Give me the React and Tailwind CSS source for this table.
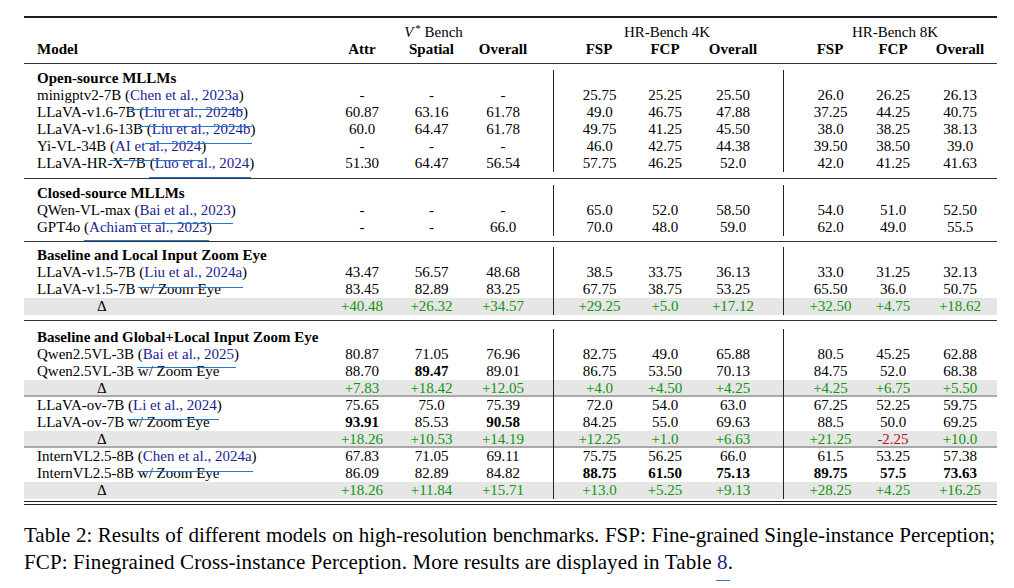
import React from "react";

const GRID =
  "grid grid-cols-[303px_70px_69px_74px_13px_92px_40px_96px_2px_94px_32px_14px_74px] h-[17px] items-center";

const sections = [
  {
    title: "Open-source MLLMs",
    rows: [
      { name: "minigptv2-7B", cite: "Chen et al., 2023a", v: ["-", "-", "-", "25.75", "25.25", "25.50", "26.0", "26.25", "26.13"] },
      { name: "LLaVA-v1.6-7B", cite: "Liu et al., 2024b", v: ["60.87", "63.16", "61.78", "49.0", "46.75", "47.88", "37.25", "44.25", "40.75"] },
      { name: "LLaVA-v1.6-13B", cite: "Liu et al., 2024b", v: ["60.0", "64.47", "61.78", "49.75", "41.25", "45.50", "38.0", "38.25", "38.13"] },
      { name: "Yi-VL-34B", cite: "AI et al., 2024", v: ["-", "-", "-", "46.0", "42.75", "44.38", "39.50", "38.50", "39.0"] },
      { name: "LLaVA-HR-X-7B", cite: "Luo et al., 2024", v: ["51.30", "64.47", "56.54", "57.75", "46.25", "52.0", "42.0", "41.25", "41.63"] },
    ],
    pt: "pt-[6px]",
    pb: "pb-[6px]",
  },
  {
    title: "Closed-source MLLMs",
    rows: [
      { name: "QWen-VL-max", cite: "Bai et al., 2023", v: ["-", "-", "-", "65.0", "52.0", "58.50", "54.0", "51.0", "52.50"] },
      { name: "GPT4o", cite: "Achiam et al., 2023", v: ["-", "-", "66.0", "70.0", "48.0", "59.0", "62.0", "49.0", "55.5"] },
    ],
    pt: "pt-[6px]",
    pb: "pb-[5px]",
  },
  {
    title: "Baseline and Local Input Zoom Eye",
    rows: [
      { name: "LLaVA-v1.5-7B", cite: "Liu et al., 2024a", v: ["43.47", "56.57", "48.68", "38.5", "33.75", "36.13", "33.0", "31.25", "32.13"] },
      { name: "LLaVA-v1.5-7B w/ Zoom Eye", v: ["83.45", "82.89", "83.25", "67.75", "38.75", "53.25", "65.50", "36.0", "50.75"] },
      { delta: true, v: ["+40.48", "+26.32", "+34.57", "+29.25", "+5.0", "+17.12", "+32.50", "+4.75", "+18.62"] },
    ],
    pt: "pt-[5px]",
    pb: "pb-[5px]",
  },
  {
    title: "Baseline and Global+Local Input Zoom Eye",
    rows: [
      { name: "Qwen2.5VL-3B", cite: "Bai et al., 2025", v: ["80.87", "71.05", "76.96", "82.75", "49.0", "65.88", "80.5", "45.25", "62.88"] },
      { name: "Qwen2.5VL-3B w/ Zoom Eye", v: ["88.70", "*89.47", "89.01", "86.75", "53.50", "70.13", "84.75", "52.0", "68.38"] },
      { delta: true, sub: true, v: ["+7.83", "+18.42", "+12.05", "+4.0", "+4.50", "+4.25", "+4.25", "+6.75", "+5.50"] },
      { name: "LLaVA-ov-7B", cite: "Li et al., 2024", v: ["75.65", "75.0", "75.39", "72.0", "54.0", "63.0", "67.25", "52.25", "59.75"] },
      { name: "LLaVA-ov-7B w/ Zoom Eye", v: ["*93.91", "85.53", "*90.58", "84.25", "55.0", "69.63", "88.5", "50.0", "69.25"] },
      { delta: true, sub: true, v: ["+18.26", "+10.53", "+14.19", "+12.25", "+1.0", "+6.63", "+21.25", "!-2.25", "+10.0"] },
      { name: "InternVL2.5-8B", cite: "Chen et al., 2024a", v: ["67.83", "71.05", "69.11", "75.75", "56.25", "66.0", "61.5", "53.25", "57.38"] },
      { name: "InternVL2.5-8B w/ Zoom Eye", v: ["86.09", "82.89", "84.82", "*88.75", "*61.50", "*75.13", "*89.75", "*57.5", "*73.63"] },
      { delta: true, v: ["+18.26", "+11.84", "+15.71", "+13.0", "+5.25", "+9.13", "+28.25", "+4.25", "+16.25"] },
    ],
    pt: "pt-[8px]",
    pb: "pb-[2px]",
  },
];

function Val({ s, delta, line }) {
  let text = s;
  let cls = "flex h-full items-center justify-center whitespace-nowrap";
  if (line) cls += " border-l border-[#222]";
  if (s.startsWith("*")) {
    text = s.slice(1);
    cls += " font-bold";
  } else if (s.startsWith("!")) {
    text = s.slice(1);
    cls += " text-[#b01515]";
  } else if (delta) {
    cls += " text-[#0f960f]";
  }
  return <div className={cls}>{text}</div>;
}

function Empty({ line }) {
  return <div className={line ? "h-full border-l border-[#222]" : "h-full"} />;
}

function Cells({ v, delta }) {
  return (
    <>
      <Val s={v[0]} delta={delta} />
      <Val s={v[1]} delta={delta} />
      <Val s={v[2]} delta={delta} />
      <Empty />
      <Val s={v[3]} delta={delta} line />
      <Val s={v[4]} delta={delta} />
      <Val s={v[5]} delta={delta} />
      <Empty />
      <Val s={v[6]} delta={delta} line />
      <Val s={v[7]} delta={delta} />
      <Empty />
      <Val s={v[8]} delta={delta} />
    </>
  );
}

function BlankCells() {
  return (
    <>
      <Empty />
      <Empty />
      <Empty />
      <Empty />
      <Empty line />
      <Empty />
      <Empty />
      <Empty />
      <Empty line />
      <Empty />
      <Empty />
      <Empty />
    </>
  );
}

function Row({ r }) {
  if (r.delta) {
    return (
      <div
        className={
          GRID +
          " bg-[#e6e6e6]" +
          (r.sub ? " box-border border-b-2 border-[#a9a9a9]" : "")
        }
      >
        <div className="pl-[73px]">Δ</div>
        <Cells v={r.v} delta />
      </div>
    );
  }
  return (
    <div className={GRID}>
      <div className="pl-[13px] whitespace-nowrap">
        {r.name}
        {r.cite && (
          <>
            {" ("}
            <span className="text-[#1c1c94]">{r.cite}</span>
            {")"}
          </>
        )}
      </div>
      <Cells v={r.v} />
    </div>
  );
}

function Section({ s }) {
  return (
    <div className={s.pt + " " + s.pb}>
      <div className={GRID}>
        <div className="pl-[13px] font-bold whitespace-nowrap">{s.title}</div>
        <BlankCells />
      </div>
      {s.rows.map((r, i) => (
        <Row key={i} r={r} />
      ))}
    </div>
  );
}

export default function App() {
  return (
    <div className="relative w-[1014px] h-[588px] overflow-hidden bg-white text-black font-['Liberation_Serif',serif] text-[15px] leading-[17px]">
      <div className="ml-[24px] mt-[16px] w-[973px]">
        <div className="h-[2px] bg-[#1e1e1e]" />
        <div className="pt-[6px] pb-[5px]">
          <div className="grid grid-cols-[303px_213px_13px_228px_2px_214px] h-[17px] items-center">
            <div />
            <div className="flex justify-center">
              <span>
                <span className="italic">V</span>
                <sup className="text-[11px] ml-[2px]">*</sup> Bench
              </span>
            </div>
            <div />
            <div className="flex justify-center">HR-Bench 4K</div>
            <div />
            <div className="flex justify-center pl-[10px]">HR-Bench 8K</div>
          </div>
          <div className={GRID + " font-bold"}>
            <div className="pl-[13px]">Model</div>
            <div className="flex justify-center">Attr</div>
            <div className="flex justify-center">Spatial</div>
            <div className="flex justify-center">Overall</div>
            <div />
            <div className="flex justify-center">FSP</div>
            <div className="flex justify-center">FCP</div>
            <div className="flex justify-center">Overall</div>
            <div />
            <div className="flex justify-center">FSP</div>
            <div className="flex justify-center">FCP</div>
            <div />
            <div className="flex justify-center">Overall</div>
          </div>
        </div>
        <div className="h-px bg-[#333]" />
        <Section s={sections[0]} />
        <div className="h-px bg-[#333]" />
        <Section s={sections[1]} />
        <div className="h-px bg-[#333]" />
        <Section s={sections[2]} />
        <div className="h-px bg-[#333]" />
        <Section s={sections[3]} />
        <div className="h-px bg-[#222]" />
        <div className="h-[2px]" />
        <div className="h-px bg-[#222]" />
      </div>

      <div className="ml-[24px] mt-[17px] w-[971px] text-[21px] leading-[27px]">
        <div className="text-justify [text-align-last:justify]">
          Table 2: Results of different models on high-resolution benchmarks. FSP: Fine-grained Single-instance Perception;
        </div>
        <div className="tracking-[0.12px] whitespace-nowrap">
          FCP: Finegrained Cross-instance Perception. More results are displayed in Table{" "}
          <span className="text-[#1c1c94]">8</span>.
        </div>
      </div>

      {/* link annotation borders drawn over the page */}
      <div className="absolute left-[128px] top-[109px] w-[115px] h-px bg-[#1f78d1]" />
      <div className="absolute left-[138px] top-[126px] w-[114px] h-px bg-[#1f78d1]" />
      <div className="absolute left-[145px] top-[143px] w-[107px] h-px bg-[#1f78d1]" />
      <div className="absolute left-[110px] top-[160px] w-[93px] h-px bg-[#1f78d1]" />
      <div className="absolute left-[149px] top-[177px] w-[102px] h-px bg-[#1f78d1]" />
      <div className="absolute left-[134px] top-[223px] w-[99px] h-px bg-[#1f78d1]" />
      <div className="absolute left-[84px] top-[240px] w-[125px] h-px bg-[#1f78d1]" />
      <div className="absolute left-[138px] top-[287px] w-[105px] h-px bg-[#1f78d1]" />
      <div className="absolute left-[137px] top-[367px] w-[99px] h-px bg-[#1f78d1]" />
      <div className="absolute left-[127px] top-[419px] w-[92px] h-px bg-[#1f78d1]" />
      <div className="absolute left-[137px] top-[471px] w-[116px] h-px bg-[#1f78d1]" />
      <div className="absolute left-[716px] top-[580px] w-[14px] h-px bg-[#1f78d1]" />
    </div>
  );
}
